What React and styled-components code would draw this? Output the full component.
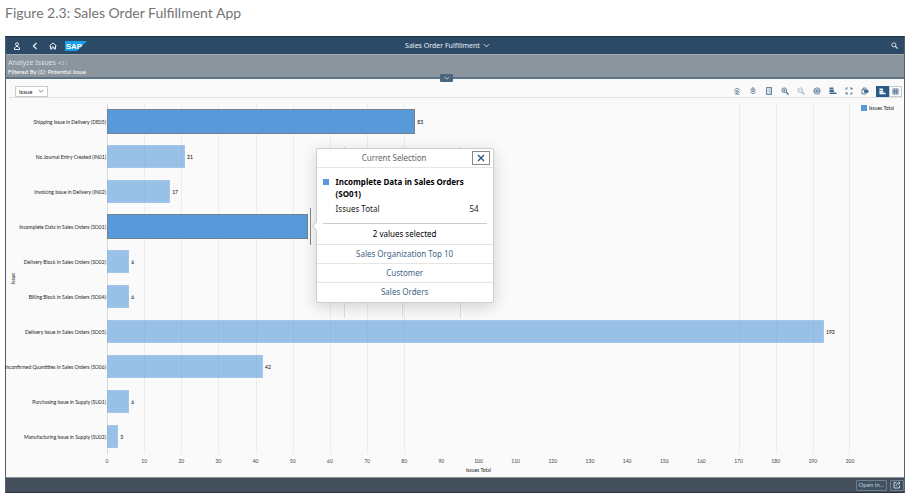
import React from "react";
import styled, { createGlobalStyle, css } from "styled-components";

const Global = createGlobalStyle`
  *, *::before, *::after { box-sizing: border-box; }
  body { margin: 0; background: #fff; font-family: "Noto Sans", "Open Sans", sans-serif; }
  button, input, select { font: inherit; color: inherit; margin: 0; padding: 0; }
  h1, h2, p, ul, ol { margin: 0; padding: 0; font-weight: 400; list-style: none; }
`;

const small = "Lato, sans-serif";

const Figure = styled.figure`
  margin: 0;
  padding: 3px 11px 6px 5px;
  display: flex;
  flex-direction: column;
`;
const Caption = styled.figcaption`
  font-family: Lato, sans-serif;
  font-size: 14px;
  line-height: 20px;
  color: #757575;
  margin-bottom: 13px;
`;
const Frame = styled.div`
  border: 1px solid #55616c;
  border-top-color: #1d3040;
  border-bottom-color: #2a3340;
  background: #fafafa;
`;

const Shell = styled.header`
  display: grid;
  grid-template-columns: 1fr auto 1fr;
  align-items: center;
  height: 17px;
  padding: 0 4px 0 5px;
  background: #2c4a66;
  color: #e6edf3;
`;
const ShellGroup = styled.div`
  display: flex;
  align-items: center;
  gap: 6px;
  justify-content: ${(p) => (p.$end ? "flex-end" : "flex-start")};
`;
const IconButton = styled.button`
  display: grid;
  place-items: center;
  width: 12px;
  height: 12px;
  border: 0;
  background: none;
  color: inherit;
`;
const TitleButton = styled.button`
  display: flex;
  align-items: center;
  gap: 3px;
  margin-right: 16px;
  border: 0;
  background: none;
  font-size: 7px;
  line-height: 16px;
`;

const FilterBar = styled.section`
  height: 25px;
  padding: 3px 2px 0;
  background: #8a959d;
  border-top: 1px solid #a3adb5;
  border-bottom: 2px solid #5c7388;
  color: #fff;
  position: relative;
`;
const PageTitle = styled.h1`
  font-size: 7px;
  line-height: 10px;
  color: #dde2e6;
`;
const Count = styled.span`
  font-size: 6px;
  color: #c3c9ce;
`;
const FilterText = styled.p`
  font-family: ${small};
  font-size: 6px;
  line-height: 8px;
`;
const Expand = styled.button`
  position: absolute;
  left: 50%;
  bottom: -5px;
  width: 13px;
  height: 8px;
  margin-left: -15px;
  display: grid;
  place-items: center;
  border: 0;
  border-radius: 1px;
  background: #4a6680;
  color: #dbe4ec;
`;

const Toolbar = styled.div`
  display: flex;
  align-items: center;
  justify-content: space-between;
  height: 19px;
  margin: 0 2px 0 3px;
  padding: 6px 0 0 6px;
  border-bottom: 1px solid #e2e2e2;
`;
const SelectWrap = styled.label`
  display: grid;
  align-items: center;
  width: 33px;
  height: 11px;
  border: 1px solid #cdcdcd;
  background: #fff;
  & > * { grid-area: 1 / 1; }
  & > svg { justify-self: end; margin-right: 3px; pointer-events: none; color: #4a6680; }
`;
const Select = styled.select`
  appearance: none;
  width: 100%;
  height: 9px;
  border: 0;
  background: none;
  padding-left: 3px;
  font-family: ${small};
  font-size: 6px;
  line-height: 9px;
  color: #222;
`;
const Tools = styled.div`
  display: flex;
  align-items: center;
  gap: 4px;
  color: #426a90;
`;
const Segments = styled.div`
  display: flex;
  margin-left: 1px;
`;
const Segment = styled.button`
  display: grid;
  place-items: center;
  width: 13px;
  height: 11px;
  border: 1px solid ${(p) => (p.$on ? "#275a87" : "#c3cdd6")};
  background: ${(p) => (p.$on ? "#275a87" : "#fafafa")};
  color: ${(p) => (p.$on ? "#fff" : "#4f7396")};
`;

const Chart = styled.section`
  display: grid;
  grid-template-columns: 101px 1fr 54px;
  padding-top: 6px;
  font-family: ${small};
  font-size: 5px;
  line-height: 8px;
  color: #222;
`;
const AxisLabels = styled.div`
  display: grid;
`;
const Categories = styled.ul`
  grid-area: 1 / 1;
  min-width: 0;
`;
const Category = styled.li`
  display: flex;
  align-items: center;
  justify-content: flex-end;
  height: 35px;
  padding-right: 1px;
  white-space: nowrap;
`;
const AxisName = styled.span`
  grid-area: 1 / 1;
  align-self: center;
  justify-self: start;
  margin-left: 4px;
  writing-mode: vertical-rl;
  transform: rotate(180deg);
  line-height: 6px;
`;
const Plot = styled.div`
  display: grid;
  & > * { grid-area: 1 / 1; min-width: 0; }
`;
const GridLines = styled.div`
  display: grid;
  grid-template-columns: repeat(20, 1fr);
`;
const GridCell = styled.span`
  border-left: 1px solid ${(p) => (p.$axis ? "#d9d9d9" : p.$faint ? "transparent" : "#ececec")};
  ${(p) => p.$last && css`border-right: 1px solid #ececec;`}
`;
const Bars = styled.ul`
  display: flex;
  flex-direction: column;
`;
const BarRow = styled.li`
  display: flex;
  align-items: center;
  height: 35px;
`;
const Bar = styled.button`
  flex: none;
  display: block;
  height: ${(p) => (p.$selected ? "25px" : "23px")};
  background: ${(p) => (p.$selected ? "#5899da" : "rgba(88, 153, 218, 0.6)")};
  border: 1px solid ${(p) => (p.$selected ? "#77828c" : "rgba(255, 255, 255, 0.1)")};
`;
const Value = styled.span`
  padding-left: 2px;
  color: #000;
`;
const Anchor = styled.div`
  position: relative;
  height: 37px;
  width: 1px;
  margin-left: 2px;
  background: #858585;
  &::before {
    content: "";
    position: absolute;
    left: 34px;
    top: -62px;
    width: 117px;
    height: 172px;
    background: repeating-linear-gradient(90deg, #e0e0e0 0 1px, transparent 1px 58px);
  }
`;
const Ticks = styled.ol`
  grid-column: 2;
  display: grid;
  grid-template-columns: repeat(21, 1fr);
  margin: 3px calc(-100% / 40) 0;
  text-align: center;
  color: #444;
`;
const AxisCaption = styled.p`
  grid-column: 2;
  text-align: center;
  padding: 1px 0 3px;
`;
const Legend = styled.div`
  display: flex;
  align-items: center;
  align-self: start;
  gap: 2px;
  padding-left: 11px;
  white-space: nowrap;
`;
const Swatch = styled.span`
  flex: none;
  width: 6px;
  height: 6px;
  background: #5899da;
`;

const Popup = styled.div`
  position: absolute;
  z-index: 2;
  left: 6px;
  bottom: -58px;
  width: 178px;
  padding-bottom: 1px;
  border: 1px solid #cfcfcf;
  border-radius: 2px;
  background: #fff;
  box-shadow: 0 4px 16px rgba(0, 0, 0, 0.16);
  font-family: "Noto Sans", sans-serif;
  font-size: 8px;
  line-height: 12px;
  color: #222;
  &::before {
    content: "";
    position: absolute;
    left: -4px;
    top: 50%;
    width: 6px;
    height: 6px;
    margin-top: -3px;
    background: #fff;
    border-left: 1px solid #cfcfcf;
    border-bottom: 1px solid #cfcfcf;
    transform: rotate(45deg);
  }
`;
const PopupHead = styled.div`
  display: grid;
  grid-template-columns: 1fr 18px;
  align-items: center;
  height: 19px;
  padding: 0 3px;
  border-bottom: 1px solid #e5e5e5;
`;
const PopupTitle = styled.h2`
  font-size: 8px;
  line-height: 12px;
  color: #666;
  text-align: center;
  padding-right: 3px;
`;
const Close = styled.button`
  display: grid;
  place-items: center;
  width: 18px;
  height: 14px;
  border: 1px solid #8a8a8a;
  background: #fff;
  color: #23527c;
`;
const Detail = styled.div`
  display: grid;
  grid-template-columns: 6px 1fr auto;
  column-gap: 7px;
  margin: 0 6px;
  padding: 8px 8px 8px 0;
  border-bottom: 1px solid #ccc;
  & > ${Swatch} { margin-top: 3px; }
`;
const DetailName = styled.strong`
  grid-column: 2 / 4;
  color: #000;
`;
const Measure = styled.span`
  grid-column: ${(p) => p.$col};
  padding-top: 3px;
`;
const Selected = styled.p`
  line-height: 20px;
  text-align: center;
  color: #000;
`;
const PopupLink = styled.a`
  display: block;
  border-top: 1px solid #e5e5e5;
  line-height: 18px;
  text-align: center;
  color: #3f6488;
  text-decoration: none;
`;

const Footer = styled.footer`
  display: flex;
  align-items: center;
  justify-content: flex-end;
  gap: 3px;
  height: 15px;
  border-top: 1px solid #8d969e;
  background: #434f5b;
  color: #b8d0e8;
`;
const FooterButton = styled.button`
  display: grid;
  place-items: center;
  height: 11px;
  padding: 0 2px;
  border: 1px solid #6c8091;
  border-radius: 1px;
  background: #43505d;
  font-family: ${small};
  font-size: 6px;
  line-height: 8px;
`;

const Svg = ({ size = 8, box = 16, w = 2, children }) => (
  <svg width={size} height={size} viewBox={`0 0 ${box} ${box}`} fill="none" stroke="currentColor" strokeWidth={w} aria-hidden="true">
    {children}
  </svg>
);
const Down = ({ size = 7 }) => <Svg size={size}><path d="M2 5l6 6 6-6" /></Svg>;
const magnifier = <><circle cx="6.5" cy="6.5" r="4.7" /><path d="M10 10l5 5" strokeWidth="2.6" /></>;
const barsGlyph = <path d="M1 1h8v4H1zM1 6h9v4H1zM1 11h14v3H1z" fill="currentColor" stroke="none" />;

const tools = [
  ["Drill up", <><path d="M2 7l6-5 6 5M3 11l5-4 5 4" /><path d="M4 14h8M8 7v7" /></>],
  ["Drill down", <><circle cx="8" cy="4" r="2.5" /><path d="M3 6l5 4 5-4M3 10l5 4 5-4" /></>],
  ["Legend", <><path d="M3 1h10v14H3z" /><path d="M5 4h2M5 8h2M5 12h2M8.5 4h3M8.5 8h3M8.5 12h3" /></>],
  ["Zoom in", <>{magnifier}<path d="M4 6.5h5M6.5 4v5" /></>],
  ["Zoom out", <g opacity="0.5">{magnifier}<path d="M4 6.5h5" /></g>],
  ["Settings", <><circle cx="8" cy="8" r="6.3" /><circle cx="8" cy="8" r="2.3" /><path d="M2 6h12M2 10h12" strokeWidth="1" /></>],
  ["Chart type", barsGlyph],
  ["Full screen", <path d="M2 6V2h4M10 2h4v4M14 10v4h-4M6 14H2v-4M11 5l3-3M5 11l-3 3" />],
  ["Add to tile", <><path d="M2 5h6M2 5v9h8v-2M4 5V2h6v3" /><path d="M7 6h7v5H7z" fill="currentColor" /></>],
];

const MAX = 200;
const issues = [
  { name: "Shipping Issue in Delivery (DE05)", value: 83, selected: true },
  { name: "No Journal Entry Created (IN01)", value: 21 },
  { name: "Invoicing Issue in Delivery (IN02)", value: 17 },
  { name: "Incomplete Data in Sales Orders (SO01)", value: 54, selected: true, open: true },
  { name: "Delivery Block in Sales Orders (SO02)", value: 6 },
  { name: "Billing Block in Sales Orders (SO04)", value: 6 },
  { name: "Delivery Issue in Sales Orders (SO05)", value: 193 },
  { name: "Inconfirmed Quantities in Sales Orders (SO06)", value: 42 },
  { name: "Purchasing Issue in Supply (SU01)", value: 6 },
  { name: "Manufacturing Issue in Supply (SU02)", value: 3 },
];

const SapLogo = () => (
  <svg width="22" height="10" viewBox="0 0 66 30" role="img" aria-label="SAP">
    <path d="M0 0h66L36 30H0z" fill="#18a0e6" />
    <text x="2" y="24" fill="#fff" fontFamily="Liberation Sans, Arial, sans-serif" fontWeight="700" fontSize="24">SAP</text>
  </svg>
);

const SelectionPopup = () => (
  <Popup role="dialog" aria-label="Current Selection">
    <PopupHead>
      <PopupTitle>Current Selection</PopupTitle>
      <Close aria-label="Close"><Svg size={8} w={2.6}><path d="M2 2l12 12M14 2L2 14" /></Svg></Close>
    </PopupHead>
    <Detail>
      <Swatch />
      <DetailName>Incomplete Data in Sales Orders (SO01)</DetailName>
      <Measure $col="2">Issues Total</Measure>
      <Measure $col="3">54</Measure>
    </Detail>
    <Selected>2 values selected</Selected>
    <PopupLink href="#top10">Sales Organization Top 10</PopupLink>
    <PopupLink href="#customer">Customer</PopupLink>
    <PopupLink href="#orders">Sales Orders</PopupLink>
  </Popup>
);

export default function App() {
  return (
    <>
      <Global />
      <Figure>
        <Caption>Figure 2.3: Sales Order Fulfillment App</Caption>
        <Frame>
          <Shell>
            <ShellGroup>
              <IconButton aria-label="User"><Svg><circle cx="8" cy="4.5" r="3" /><path d="M3 15v-3l3-3h4l3 3v3z" /></Svg></IconButton>
              <IconButton aria-label="Back"><Svg w={2.6}><path d="M11 2L5 8l6 6" /></Svg></IconButton>
              <IconButton aria-label="Home"><Svg><path d="M1 8l7-6 7 6M3 7v7h3v-4h4v4h3V7" /></Svg></IconButton>
              <SapLogo />
            </ShellGroup>
            <TitleButton>Sales Order Fulfillment <Down /></TitleButton>
            <ShellGroup $end>
              <IconButton aria-label="Search"><Svg size={7}>{magnifier}</Svg></IconButton>
            </ShellGroup>
          </Shell>
          <FilterBar>
            <PageTitle>Analyze Issues <Count>431</Count></PageTitle>
            <FilterText>Filtered By (1): Potential Issue</FilterText>
            <Expand aria-label="Expand header"><Down size={6} /></Expand>
          </FilterBar>
          <Toolbar>
            <SelectWrap>
              <Select aria-label="Dimension" defaultValue="Issue"><option>Issue</option></Select>
              <Down size={6} />
            </SelectWrap>
            <Tools>
              {tools.map(([name, glyph]) => (
                <IconButton key={name} aria-label={name}><Svg w={1.6}>{glyph}</Svg></IconButton>
              ))}
              <Segments>
                <Segment $on aria-label="Chart view"><Svg size={7}>{barsGlyph}</Svg></Segment>
                <Segment aria-label="Table view"><Svg size={7} w={1.6}><path d="M2 2h12v12H2zM2 5h12M2 8h12M2 11h12M6 2v12M10 2v12" /></Svg></Segment>
              </Segments>
            </Tools>
          </Toolbar>
          <Chart>
            <AxisLabels>
              <Categories>
                {issues.map((d) => <Category key={d.name}>{d.name}</Category>)}
              </Categories>
              <AxisName>Issue</AxisName>
            </AxisLabels>
            <Plot>
              <GridLines>
                {Array.from({ length: 20 }, (_, i) => (
                  <GridCell key={i} $axis={i === 0} $faint={i > 8 && i < 17} $last={i === 19} />
                ))}
              </GridLines>
              <Bars>
                {issues.map((d) => (
                  <BarRow key={d.name}>
                    <Bar $selected={d.selected} aria-label={`${d.name}: ${d.value}`} style={{ width: `${(d.value / MAX) * 100}%` }} />
                    {d.open ? <Anchor><SelectionPopup /></Anchor> : <Value>{d.value}</Value>}
                  </BarRow>
                ))}
              </Bars>
            </Plot>
            <Legend><Swatch />Issues Total</Legend>
            <Ticks>
              {Array.from({ length: 21 }, (_, i) => <li key={i}>{i * 10}</li>)}
            </Ticks>
            <AxisCaption>Issues Total</AxisCaption>
          </Chart>
          <Footer>
            <FooterButton>Open In...</FooterButton>
            <FooterButton aria-label="Share"><Svg size={8}><path d="M7 3H2v11h11V9M6 10c0-4 3-6 8-6M11 1l3 3-3 3" /></Svg></FooterButton>
          </Footer>
        </Frame>
      </Figure>
    </>
  );
}
